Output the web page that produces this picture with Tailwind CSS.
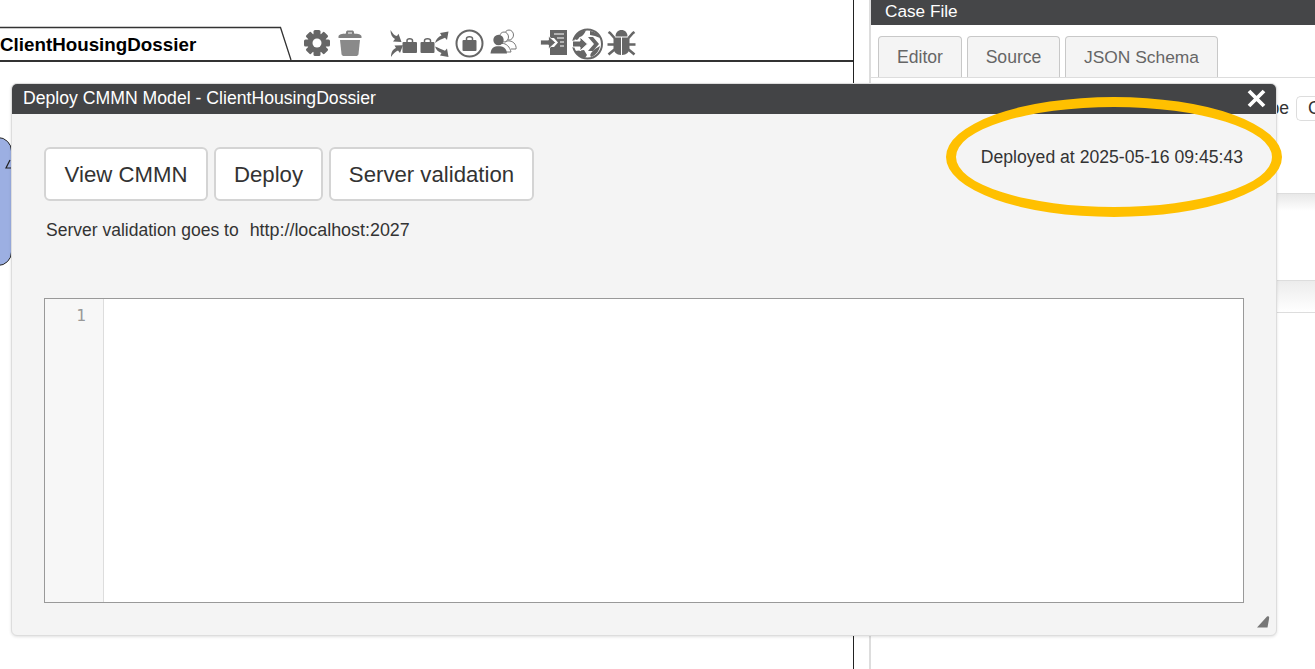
<!DOCTYPE html>
<html lang="en">
<head>
  <meta charset="UTF-8">
  <title>Deploy CMMN Model</title>
  <script src="https://cdn.jsdelivr.net/npm/@tailwindcss/browser@4"></script>
</head>
<body class="bg-white">

<div class="relative w-[1315px] h-[669px] overflow-hidden flex font-['Liberation_Sans',Arial,sans-serif] text-[#333]">

  <!-- Canvas pane -->
  <div class="w-[854px] h-full flex flex-col border-r border-[#222] shrink-0 relative">
    <div class="h-[62px] flex items-start border-b-2 border-[#333] shrink-0 box-border">
      <div class="relative w-[292px] h-[60px] shrink-0">
        <svg class="absolute left-0 top-0" width="292" height="60"><path d="M0 27.5H280.5L291 60" fill="none" stroke="#333" stroke-width="1.3"/></svg>
        <div class="pt-[34px] text-[18.8px] leading-[21px] font-bold text-black">ClientHousingDossier</div>
      </div>
      <!-- Toolbar -->
      <div class="flex items-start pt-[29px]">
        <svg class="ml-[11px]" width="28" height="28" viewBox="0 0 28 28" fill="#666">
          <g>
            <rect x="10.5" y="1" width="7" height="26" rx="1.5"/>
            <rect x="10.5" y="1" width="7" height="26" rx="1.5" transform="rotate(45 14 14)"/>
            <rect x="10.5" y="1" width="7" height="26" rx="1.5" transform="rotate(90 14 14)"/>
            <rect x="10.5" y="1" width="7" height="26" rx="1.5" transform="rotate(135 14 14)"/>
          </g>
          <circle cx="14" cy="14" r="9.5"/>
          <circle cx="14" cy="14" r="4.5" fill="#fff"/>
        </svg>
        <svg class="ml-[6px]" width="26" height="28" viewBox="0 0 26 28" fill="#808080">
          <path d="M9 3.5C9 2 10 1.5 11 1.5H15C16 1.5 17 2 17 3.5V4.5C21 4.8 24.5 5.5 24.5 7.5V9H1.5V7.5C1.5 5.5 5 4.8 9 4.5ZM11 3.5V4.4H15V3.5Z"/>
          <path d="M3 11H23L21.5 25C21.3 26.6 20 27 19 27H7C6 27 4.7 26.6 4.5 25Z" fill="#8a8a8a"/>
        </svg>
        <!-- Merge into bag -->
        <svg class="ml-[27px]" width="28" height="29" viewBox="0 0 28 29" fill="#666">
          <path d="M0.5 1C2.500 4.500 4.500 6.500 7 7.100L8.500 4.700L11.500 13L3 12.500L5 9.900C2 8.500 0.500 5.500 0.500 1Z"/>
          <path d="M1 28C1 23 3 20 6 19L4.500 16.500L13 16.300L10 24L8 21.500C5.500 22.500 3 25 1 28Z"/>
          <rect x="12.500" y="13" width="14.500" height="11" rx="1"/>
          <path d="M17 13.500V11.500C17 10.300 18 9.700 19.700 9.700C21.500 9.700 22.500 10.300 22.500 11.500V13.500" fill="none" stroke="#666" stroke-width="1.500"/>
        </svg>
        <!-- Split out of bag -->
        <svg class="ml-[2px]" width="29" height="29" viewBox="0 0 29 29" fill="#666">
          <rect x="0.500" y="13" width="14" height="11" rx="1"/>
          <path d="M4.500 13.500V11.500C4.500 10.300 5.500 9.700 7.500 9.700C9.500 9.700 10.500 10.300 10.500 11.500V13.500" fill="none" stroke="#666" stroke-width="1.500"/>
          <path d="M15 14C16 10 18.500 7.500 21.500 6.500L20 4L28.500 2.500L27 11L25 8.800C22 10 18.500 11.500 15 14Z"/>
          <path d="M15 17.500C18.500 19 22 20.500 25 21.700L27 19.500L28.500 28L20 26.500L21.500 24C18.500 23 16 21 15 17.500Z"/>
        </svg>
        <!-- Bag in circle -->
        <svg class="ml-[6px]" width="29" height="29" viewBox="0 0 29 29" fill="#666">
          <circle cx="14.500" cy="14.500" r="13" fill="none" stroke="#666" stroke-width="2"/>
          <rect x="7.500" y="11" width="14" height="11" rx="1"/>
          <path d="M11.500 11.500V9.500C11.500 8.300 12.500 7.700 14.500 7.700C16.500 7.700 17.500 8.300 17.500 9.500V11.500" fill="none" stroke="#666" stroke-width="1.500"/>
        </svg>
        <!-- People -->
        <svg class="ml-[6px]" width="27" height="26" viewBox="0 0 27 26" fill="#666">
          <ellipse cx="19" cy="6" rx="4.500" ry="5" fill="none" stroke="#777" stroke-width="1"/>
          <path d="M15 13C18 11 22 12 24 14C25.500 15.500 26.500 18 26 20H21" fill="none" stroke="#777" stroke-width="1"/>
          <ellipse cx="14" cy="8" rx="4.500" ry="5" fill="#fff" stroke="#777" stroke-width="1"/>
          <path d="M12 14.500C16 14 20 18 21 23H16" fill="none" stroke="#777" stroke-width="1"/>
          <circle cx="8.500" cy="11" r="5.200"/>
          <path d="M0.500 24.500C1 19 4 17.200 8.500 17.200C13 17.200 16.500 19 17 24.500Z"/>
        </svg>
        <!-- Import -->
        <svg class="ml-[23px]" width="28" height="27" viewBox="0 0 28 27" fill="#666">
          <path d="M10 1H27V26H10V18H14L18 13.500L14 9H10Z"/>
          <path d="M14 5H24M17 9H24M20 13H24M20 17H24" stroke="#fff" stroke-width="1"/>
          <path d="M0.500 11H8.500V7L15.500 13.500L8.500 20V16H0.500Z" stroke="#fff" stroke-width="0.800"/>
        </svg>
        <!-- Deploy globe -->
        <svg class="ml-[3px] -mt-[1px]" width="33" height="32" viewBox="0 0 33 32" fill="#666">
          <circle cx="16.500" cy="16" r="14.500" fill="#fff" stroke="#666" stroke-width="2"/>
          <path d="M3 11C6 5 10 3 15 2C14 5 12 8 9 9L6 12Z"/>
          <path d="M19 3C23 3 27 6 29 10L24 8L19 7Z"/>
          <path d="M29 18C28 23 25 27 20 29C18 26 21 24 24 21Z"/>
          <path d="M4 23L13 22L16 27L14 30C9 29 6 27 4 23Z"/>
          <path d="M17 9L22 9L28 16L22 23L17 23L23 16Z"/>
          <path d="M1.500 13H9V9L16.500 16L9 23V19H1.500Z" stroke="#fff" stroke-width="1"/>
        </svg>
        <!-- Bug -->
        <svg class="ml-[3px]" width="29" height="27" viewBox="0 0 29 27" fill="#666">
          <path d="M8.500 7.500C8.500 3.500 11 1 14.500 1C18 1 20.500 3.500 20.500 7.500Z"/>
          <path d="M6.500 8.500H14V26C9.500 26 6.500 23 6.500 19Z"/>
          <path d="M15 8.500H22.500V19C22.500 23 19.500 26 15 26Z"/>
          <path d="M1.500 3L3 4L7.500 9M27.500 3L26 4L21.500 9M0.500 15.500H7.500M28.500 15.500H21.500M1.500 25.500L7.500 20.500M27.500 25.500L21.500 20.500" fill="none" stroke="#666" stroke-width="2.600"/>
        </svg>
      </div>
    </div>
    <div class="flex-1 relative">
      <!-- Case plan shape peeking out behind the dialog -->
      <div class="absolute left-[-20px] top-[75px] w-[32px] h-[129px] rounded-[14px] border border-[#222] bg-[#9cafe2]">
        <svg class="absolute left-[24px] top-[21px]" width="6" height="12" viewBox="0 0 6 12"><path d="M5 1L1 9H6" fill="none" stroke="#222" stroke-width="1.200"/></svg>
      </div>
    </div>
  </div>

  <!-- Properties pane -->
  <div class="ml-[15px] flex-1 h-full border-l-2 border-[#ddd] flex flex-col">
    <div class="h-[25px] bg-[#454648] text-white text-[17.2px] leading-[23px] pl-[14px] shrink-0">Case File</div>
    <div class="flex gap-[5px] pl-[7px] pt-[11px] h-[41px] shrink-0 border-b border-[#ddd] box-content">
      <div class="w-[84px] h-[41px] rounded-t-[4px] border border-b-0 border-[#c8c8c8] bg-[#f4f4f4] text-[#666] text-[17.6px] flex items-center justify-center">Editor</div>
      <div class="w-[93px] h-[41px] rounded-t-[4px] border border-b-0 border-[#c8c8c8] bg-[#f4f4f4] text-[#666] text-[17.6px] flex items-center justify-center">Source</div>
      <div class="w-[153px] h-[41px] rounded-t-[4px] border border-b-0 border-[#c8c8c8] bg-[#f4f4f4] text-[#666] text-[17.4px] flex items-center justify-center">JSON Schema</div>
    </div>
    <div class="flex justify-end items-start h-[25px] mt-[18px] shrink-0 gap-[7px] overflow-hidden">
      <span class="text-[17.6px] leading-[24px]">pe</span>
      <div class="w-[19px] h-[25px] rounded-l-[5px] border border-r-0 border-[#ddd] text-[17.6px] leading-[23px] pl-[11px] overflow-hidden">C</div>
    </div>
    <div class="mt-[72px] h-[18px] border-t border-[#ddd] bg-linear-to-b from-[#e8e8e8] to-white"></div>
    <div class="mt-[69px] h-[33px] border-y border-[#ddd] bg-linear-to-b from-[#ececec] to-white"></div>
  </div>

  <!-- Deploy dialog -->
  <div class="absolute left-[11px] top-[83px] w-[1266px] h-[553px] rounded-[6px] border border-[#ddd] bg-[#f4f4f4] shadow-[0_1px_3px_rgba(0,0,0,0.12)] flex flex-col overflow-hidden">
    <div class="h-[30px] bg-[#434446] text-white text-[17.65px] leading-[29px] pl-[11px] flex justify-between shrink-0">
      <span>Deploy CMMN Model - ClientHousingDossier</span>
      <svg class="mr-[10px] mt-[5px]" width="19" height="19" viewBox="0 0 19 19"><path d="M2 2L17 17M17 2L2 17" stroke="#fff" stroke-width="3.800"/></svg>
    </div>
    <div class="flex-1 flex flex-col pl-[32px] pr-[32px] pt-[33px] relative">
      <div class="flex justify-between">
        <div class="flex gap-[6px]">
          <button class="w-[164px] h-[54px] pt-[2px] bg-white border-2 border-[#d4d4d4] rounded-[6px] text-[22.2px] text-[#333]">View CMMN</button>
          <button class="w-[109px] h-[54px] pt-[2px] bg-white border-2 border-[#d4d4d4] rounded-[6px] text-[22.2px] text-[#333]">Deploy</button>
          <button class="w-[205px] h-[54px] pt-[2px] bg-white border-2 border-[#d4d4d4] rounded-[6px] text-[22.2px] text-[#333]">Server validation</button>
        </div>
        <div class="text-[17.6px] leading-[20px] mt-[-1px] mr-[1px] pt-[1px] text-[#333]">Deployed at 2025-05-16 09:45:43</div>
      </div>
      <div class="mt-[19px] pl-[2px] flex gap-[11px] text-[17.5px] leading-[20px] text-[#333]">
        <span>Server validation goes to</span>
        <span class="text-[17.9px]">http://localhost:2027</span>
      </div>
      <div class="mt-[58px] h-[305px] border-[1.5px] border-[#999] bg-white flex">
        <div class="w-[59px] bg-[#f7f7f7] border-r border-[#ddd] text-right pr-[17px] pt-[6px] text-[16px] leading-[22px] text-[#999] font-['DejaVu_Sans_Mono','Liberation_Mono',monospace]">1</div>
      </div>
      <svg class="absolute right-[6px] bottom-[7px]" width="14" height="13" viewBox="0 0 14 13"><path d="M1 12.500L11 1.500C13 0.500 13.500 2 13 4L11.500 12.500Z" fill="#777"/></svg>
    </div>
  </div>

  <!-- Annotation -->
  <div class="absolute left-[946px] top-[97px] w-[336px] h-[120px] rounded-[50%] border-[10px] border-[#ffc000]"></div>
</div>

</body>
</html>
